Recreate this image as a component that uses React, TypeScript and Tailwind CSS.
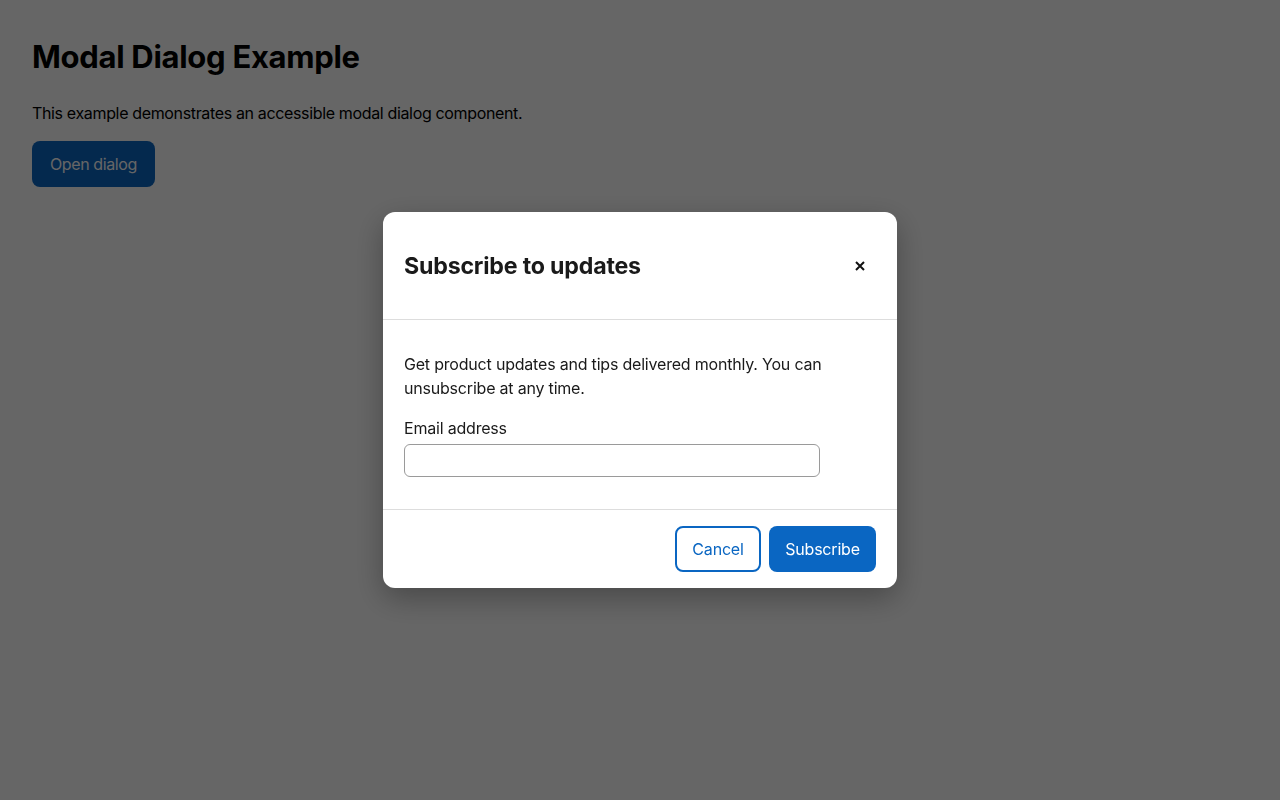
export default function App() {
  return (
    <div className="relative min-h-[800px] bg-white text-black" style={{ fontFamily: 'Inter, "Noto Sans", sans-serif' }}>
      <div className="p-8">
        <h1 className="text-[31px] font-bold leading-[48px] mt-[1px] tracking-[-0.3px]">Modal Dialog Example</h1>
        <p className="mt-[20px] text-[16px] leading-[24px] tracking-[-0.35px]">This example demonstrates an accessible modal dialog component.</p>
        <button className="mt-[16px] h-[46px] px-[18px] rounded-[8px] bg-[#0a66c2] text-white text-[16px] tracking-[-0.4px]">Open dialog</button>
      </div>
      <div className="fixed inset-0 bg-black/[0.6] flex items-center justify-center">
        <div className="w-[514px] bg-white rounded-[12px] shadow-[0_10px_30px_rgba(0,0,0,0.3)] text-[#1a1a1a]">
          <div className="flex items-center justify-between pl-[21px] pr-[27px] h-[108px] border-b border-[#dddddd]">
            <h2 className="text-[23.2px] font-bold leading-[28px] tracking-[-0.2px] mt-[1px]">Subscribe to updates</h2>
            <button aria-label="Close" className="w-[20px] h-[20px] flex items-center justify-center">
              <svg width="10" height="10" viewBox="0 0 10 10"><path d="M1 1 L9 9 M9 1 L1 9" stroke="#111" strokeWidth="2" strokeLinecap="butt" /></svg>
            </button>
          </div>
          <div className="pl-[21px] pr-5 pt-[32px] pb-[32px]">
            <p className="text-[16px] leading-[24px] pr-[40px] tracking-[-0.2px]">Get product updates and tips delivered monthly. You can unsubscribe at any time.</p>
            <label className="block mt-[16px] text-[16px] leading-[24px] tracking-[-0.2px]">Email address</label>
            <input type="email" className="mt-[4px] block w-[416px] h-[33px] border border-[#9a9a9a] rounded-[6px] px-2" />
          </div>
          <div className="flex justify-end gap-2 pl-5 pr-[21px] py-4 border-t border-[#dddddd]">
            <button className="h-[46px] w-[86px] rounded-[8px] border-2 border-[#0a66c2] text-[#0a66c2] text-[16px] tracking-[-0.2px]">Cancel</button>
            <button className="h-[46px] w-[107px] rounded-[8px] bg-[#0a66c2] text-white text-[16px] tracking-[-0.2px]">Subscribe</button>
          </div>
        </div>
      </div>
    </div>
  );
}
